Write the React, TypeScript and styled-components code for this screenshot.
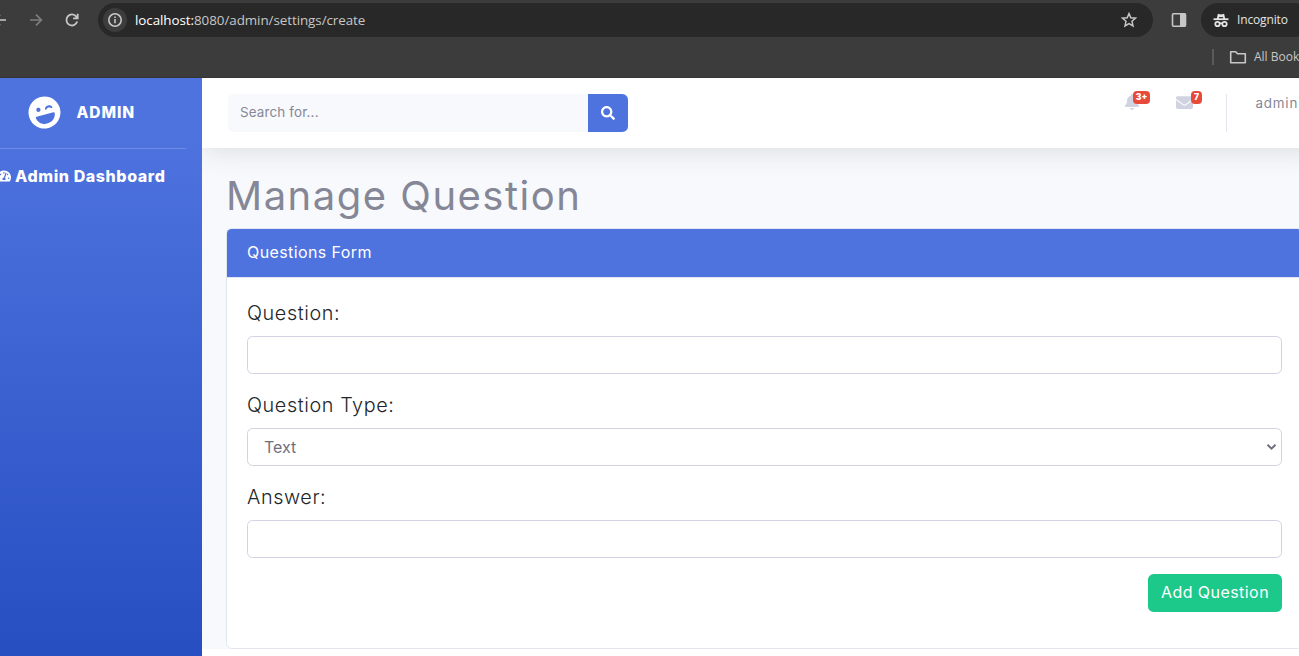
import React from 'react';
import styled, { createGlobalStyle } from 'styled-components';
import { FaBell, FaEnvelope, FaLaughWink, FaSearch, FaTachometerAlt } from 'react-icons/fa';

const GlobalStyle = createGlobalStyle`
  *, *::before, *::after { box-sizing: border-box; }
  html, body { margin: 0; height: 100%; overflow: hidden; }
  body { font-family: Inter, "Open Sans", sans-serif; font-size: 16px; line-height: 1.5; color: #858796; }
`;

const Page = styled.div`
  width: 1299px;
  height: 656px;
  display: flex;
  flex-direction: column;
  overflow: hidden;
  background: #fff;
`;

const Browser = styled.header`
  flex: none;
  height: 78px;
  background: #3c3c3c;
  border-bottom: 1px solid #343434;
  font-family: "Open Sans", "Noto Sans", sans-serif;
  color: #e3e3e3;
`;

const Toolbar = styled.div`
  display: flex;
  align-items: center;
  height: 40px;
  overflow: hidden;
`;

const NavIcon = styled.svg<{ $dim?: boolean }>`
  flex: none;
  width: 20px;
  height: 20px;
  color: ${p => (p.$dim ? '#7d7d7d' : '#c7c7c7')};
`;

const NavGroup = styled.div`
  display: flex;
  gap: 16px;
  margin-left: -10px;
  width: 108px;
  flex: none;
`;

const AddressBar = styled.div`
  display: flex;
  align-items: center;
  flex: none;
  width: 1055px;
  height: 34px;
  padding: 0 14px 0 5px;
  border-radius: 17px;
  background: #282828;
`;

const SiteInfo = styled.span`
  display: flex;
  align-items: center;
  justify-content: center;
  width: 24px;
  height: 24px;
  border-radius: 50%;
  background: #3c3c3c;
`;

const Url = styled.span`
  flex: 1;
  margin-left: 8px;
  font-size: 13.4px;
  letter-spacing: -0.06px;
  color: #c7c7c7;
  b { font-weight: 400; color: #fff; }
`;

const PanelButton = styled.span`
  display: flex;
  margin: 0 12px 0 16px;
`;

const Incognito = styled.div`
  display: flex;
  align-items: center;
  gap: 6px;
  flex: none;
  width: 110px;
  height: 34px;
  padding-left: 10px;
  border-radius: 17px;
  background: #282828;
  font-size: 12px;
  letter-spacing: -0.15px;
`;

const BookmarksBar = styled.div`
  display: flex;
  align-items: center;
  height: 34px;
  padding-left: 1212px;
  white-space: nowrap;
  font-size: 12px;
  color: #c7c7c7;
`;

const BookmarkDivider = styled.span`
  flex: none;
  width: 2px;
  height: 16px;
  margin-right: 14px;
  background: #5a5a5a;
`;

const Folder = styled(NavIcon)`
  margin-right: 6px;
`;

const Shell = styled.div`
  display: flex;
  flex: 1;
  min-height: 0;
`;

const Sidebar = styled.nav`
  flex: none;
  width: 202px;
  height: 100%;
  background: linear-gradient(180deg, #4e73df 10%, #224abe 111%);
  color: #fff;
`;

const Brand = styled.div`
  display: flex;
  align-items: center;
  height: 70px;
  padding: 0 0 2px 28px;
  font-weight: 800;
  font-size: 15.5px;
  letter-spacing: 0.9px;
  line-height: 24px;
  svg { margin-right: 15.500px; transform: rotate(-15deg); }
  span { padding-top: 2px; }
`;

const SidebarRule = styled.hr`
  width: 186px;
  margin: 0;
  border: 0;
  border-top: 1px solid rgba(255, 255, 255, 0.18);
`;

const NavItem = styled.div`
  display: flex;
  align-items: center;
  gap: 4px;
  height: 24px;
  margin: 15px 0 0 -3px;
  font-weight: 800;
  font-size: 16px;
  letter-spacing: 0.6px;
  white-space: nowrap;
`;

const Content = styled.div`
  flex: 1;
  min-width: 0;
  display: flex;
  flex-direction: column;
  overflow: hidden;
`;

const Main = styled.main`
  flex: none;
  width: 1125px;
  height: 571px;
  background: #f8f9fc;
  overflow: hidden;
`;

const Topbar = styled.div`
  display: flex;
  align-items: flex-start;
  height: 70px;
  padding: 16px 0 0 26px;
  background: #fff;
  box-shadow: 0 2.4px 28px rgba(58, 59, 69, 0.15);
`;

const Search = styled.div`
  display: flex;
  width: 400px;
  height: 38px;
  border-radius: 5.6px;
  overflow: hidden;
`;

const SearchField = styled.div`
  flex: 1;
  padding-left: 12px;
  background: #f8f9fc;
  color: #858796;
  font-size: 13.4px;
  letter-spacing: 0.16px;
  line-height: 37px;
`;

const SearchButton = styled.div`
  display: flex;
  align-items: center;
  justify-content: center;
  width: 40px;
  background: #4e73df;
  color: #fff;
`;

const Alerts = styled.div`
  display: flex;
  align-items: flex-start;
  margin-left: 496px;
  color: #d1d3e2;
`;

const AlertIcon = styled.div<{ $width: number }>`
  position: relative;
  width: ${p => p.$width}px;
  height: 18px;
  svg { display: block; }
`;

const Badge = styled.span<{ $left: number; $width: number }>`
  position: absolute;
  top: -3px;
  left: ${p => p.$left}px;
  width: ${p => p.$width}px;
  height: 13px;
  border-radius: 4px;
  background: #e74a3b;
  color: #fff;
  font-size: 8.5px;
  font-weight: 900;
  line-height: 13px;
  text-align: center;
`;

const TopDivider = styled.span`
  width: 1px;
  height: 38px;
  background: #e3e6f0;
`;

const UserName = styled.span`
  margin-left: 28.500px;
  font-size: 13.400px;
  line-height: 18px;
  letter-spacing: 0.8px;
`;

const Title = styled.h1`
  margin: 24px 0 8px 24px;
  font-size: 40px;
  font-weight: 400;
  line-height: 48px;
  letter-spacing: 1.5px;
  white-space: nowrap;
`;

const Card = styled.section`
  width: 1077px;
  height: 421px;
  margin-left: 24px;
  border: 1px solid #e3e6f0;
  border-radius: 5.6px;
  background: #fff;
  overflow: hidden;
`;

const CardHeader = styled.div`
  height: 49px;
  padding: 11px 20px;
  border-bottom: 1px solid #e3e6f0;
  background: #4e73df;
  color: #fff;
  font-size: 16px;
  line-height: 24px;
  letter-spacing: 0.4px;
`;

const CardBody = styled.div`
  display: flex;
  flex-direction: column;
  padding: 20px;
`;

const Label = styled.label`
  margin-bottom: 8px;
  color: #212529;
  font-size: 19.8px;
  font-weight: 350;
  line-height: 30px;
  letter-spacing: 0.6px;
`;

const Field = styled.div`
  display: flex;
  align-items: center;
  justify-content: space-between;
  height: 38px;
  margin-bottom: 16px;
  padding: 0 4px 1px 16px;
  border: 1px solid #d1d3e2;
  border-radius: 5.6px;
  color: #6e707e;
  font-size: 16px;
  svg { margin-top: 1px; }
`;

const Submit = styled.div`
  align-self: flex-end;
  width: 134px;
  height: 38px;
  border-radius: 5.6px;
  background: #1cc88a;
  color: #fff;
  font-size: 16px;
  letter-spacing: 0.45px;
  line-height: 37px;
  text-align: center;
  white-space: nowrap;
`;

export default function App() {
  return (
    <Page>
      <GlobalStyle />
      <Browser>
        <Toolbar>
          <NavGroup>
            <NavIcon viewBox="0 0 20 20" fill="none" stroke="currentColor" strokeWidth="1.7">
              <path d="M16 10H5M10 4.6 4.6 10l5.4 5.4" />
            </NavIcon>
            <NavIcon $dim viewBox="0 0 20 20" fill="none" stroke="currentColor" strokeWidth="1.7">
              <path d="M4 10h11M10 4.6l5.4 5.4L10 15.4" />
            </NavIcon>
            <NavIcon viewBox="0 0 20 20" fill="none" stroke="currentColor" strokeWidth="1.8">
              <path d="M15.2 11.6A5.5 5.5 0 1 1 14.3 6.6L15.6 8M15.7 3.8v4.6h-4.6" />
            </NavIcon>
          </NavGroup>
          <AddressBar>
            <SiteInfo>
              <NavIcon viewBox="0 0 20 20" fill="none" stroke="currentColor" strokeWidth="1.6">
                <circle cx="10" cy="10" r="6.2" />
                <path d="M10 9v4.2M10 6.4v1.6" />
              </NavIcon>
            </SiteInfo>
            <Url><b>localhost:</b>8080/admin/settings/create</Url>
            <NavIcon viewBox="0 0 20 20" fill="none" stroke="currentColor" strokeWidth="1.5">
              <path d="m10 3.6 1.8 4.2 4.7.4-3.5 3.1 1 4.6-4-2.4-4 2.4 1-4.6-3.5-3.1 4.7-.4z" />
            </NavIcon>
          </AddressBar>
          <PanelButton>
            <NavIcon viewBox="0 0 20 20">
              <rect x="3.5" y="3.8" width="13" height="12.4" rx="1" fill="none" stroke="currentColor" strokeWidth="1.6" />
              <path d="M11 3.5h5.5v13H11z" fill="currentColor" />
            </NavIcon>
          </PanelButton>
          <Incognito>
            <NavIcon viewBox="0 0 20 20" fill="none" stroke="#e3e3e3" strokeWidth="1.8">
              <path d="M2.5 9.2h15" />
              <path d="M5.7 9l1.2-5.200 3.100.8 3.100-.8L14.300 9z" fill="#e3e3e3" stroke="none" />
              <path d="M7.900 7.700h4.200" stroke="#282828" strokeWidth="1.200" />
              <circle cx="6.5" cy="14" r="2.2" />
              <circle cx="13.5" cy="14" r="2.2" />
              <path d="M8.6 13.5q1.4-.8 2.8 0" />
            </NavIcon>
            Incognito
          </Incognito>
        </Toolbar>
        <BookmarksBar>
          <BookmarkDivider />
          <Folder viewBox="0 0 20 20" fill="none" stroke="currentColor" strokeWidth="1.6">
            <path d="M2.7 4.7h5l1.8 2h7.8v9H2.7z" strokeLinejoin="round" />
          </Folder>
          All Bookmarks
        </BookmarksBar>
      </Browser>
      <Shell>
        <Sidebar>
          <Brand><FaLaughWink size={33} /><span>ADMIN</span></Brand>
          <SidebarRule />
          <NavItem><FaTachometerAlt size={14} />Admin Dashboard</NavItem>
        </Sidebar>
        <Content>
          <Main>
            <Topbar>
              <Search>
                <SearchField>Search for...</SearchField>
                <SearchButton><FaSearch size={14} /></SearchButton>
              </Search>
              <Alerts>
                <AlertIcon $width={52}>
                  <FaBell size={16} />
                  <Badge $left={9} $width={17}>3+</Badge>
                </AlertIcon>
                <AlertIcon $width={50}>
                  <FaEnvelope size={17} />
                  <Badge $left={15} $width={11}>7</Badge>
                </AlertIcon>
                <TopDivider />
              </Alerts>
              <UserName>admin</UserName>
            </Topbar>
            <Title>Manage Question</Title>
            <Card>
              <CardHeader>Questions Form</CardHeader>
              <CardBody>
                <Label>Question:</Label>
                <Field />
                <Label>Question Type:</Label>
                <Field>
                  Text
                  <svg width="11" height="8" viewBox="0 0 11 8" fill="none" stroke="#6e707e" strokeWidth="2">
                    <path d="m1.5 1.7 4 4 4-4" />
                  </svg>
                </Field>
                <Label>Answer:</Label>
                <Field />
                <Submit>Add Question</Submit>
              </CardBody>
            </Card>
          </Main>
        </Content>
      </Shell>
    </Page>
  );
}
